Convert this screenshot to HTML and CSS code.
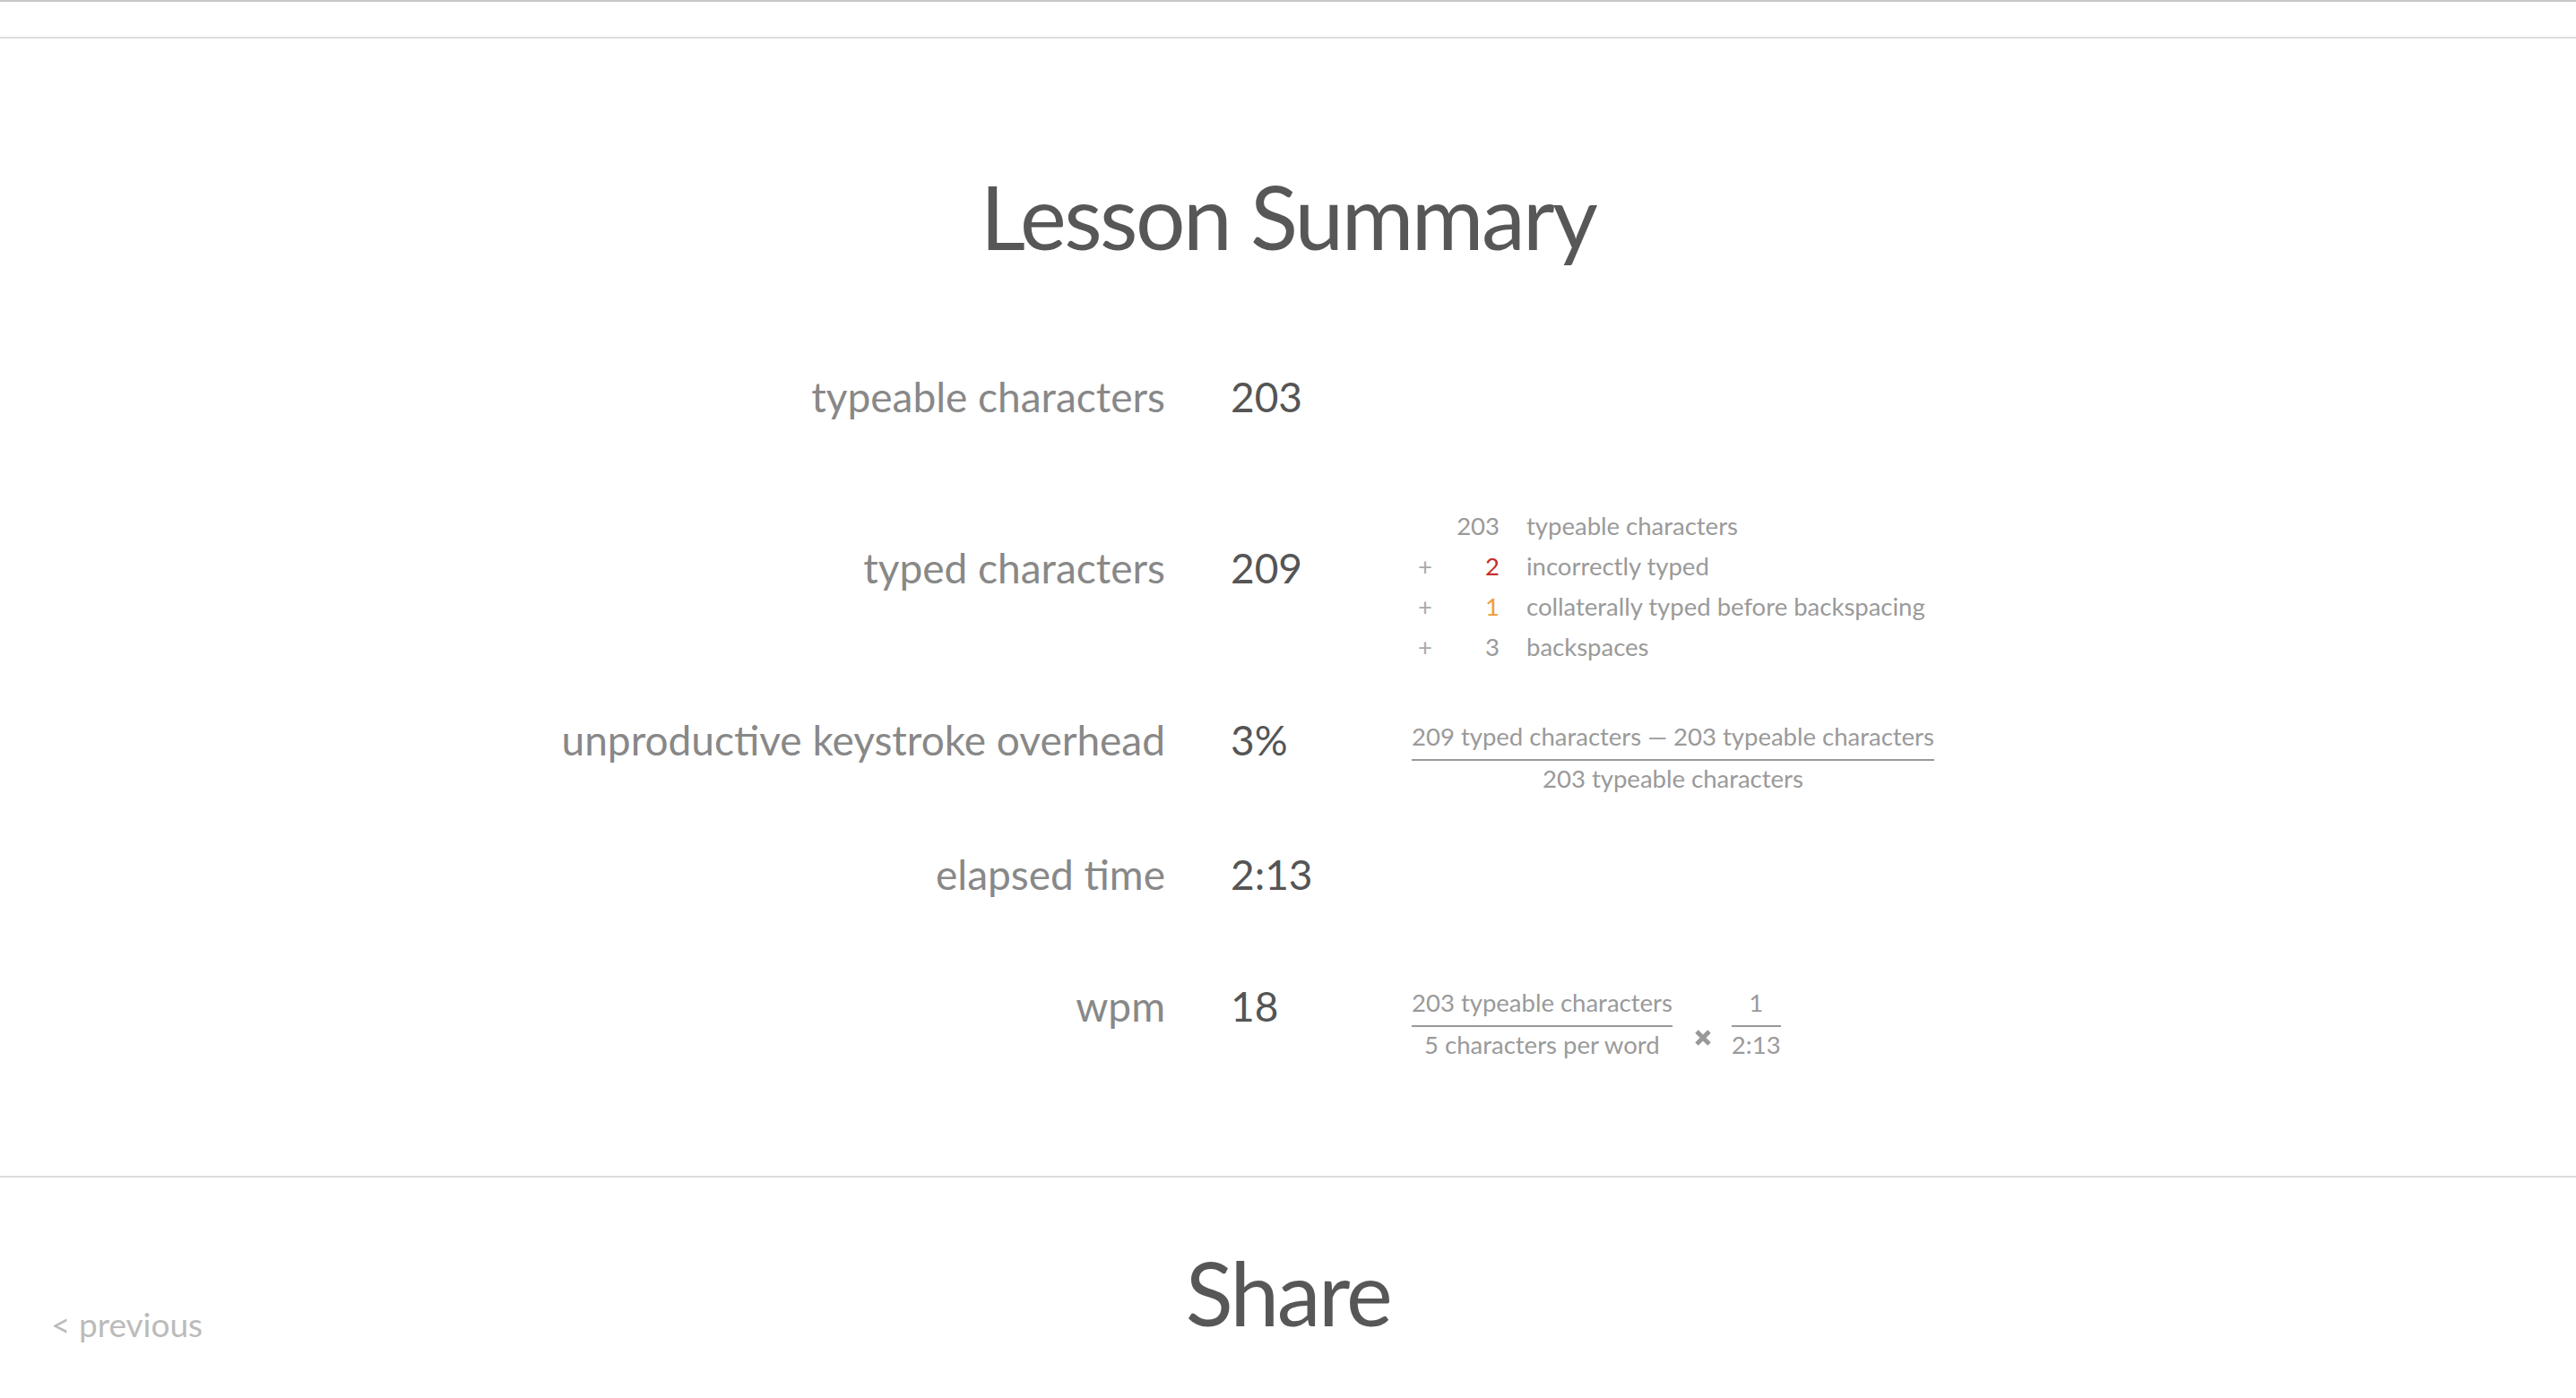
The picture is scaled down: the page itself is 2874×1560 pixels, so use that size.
FILE: index.html
```html
<!DOCTYPE html>
<html lang="en">
<head>
<meta charset="utf-8">
<title>Lesson Summary</title>
<link rel="stylesheet" href="styles.css">
</head>
<body>
<header class="topbar"></header>
<main class="summary">
  <h1 class="title">Lesson Summary</h1>
  <div class="stats">
    <div class="row">
      <div class="label">typeable characters</div>
      <div class="value">203</div>
      <div class="explain"></div>
    </div>
    <div class="row">
      <div class="label">typed characters</div>
      <div class="value">209</div>
      <div class="explain">
        <div class="breakdown">
          <span class="op"></span><span class="count">203</span><span class="desc">typeable characters</span>
          <span class="op">+</span><span class="count red">2</span><span class="desc">incorrectly typed</span>
          <span class="op">+</span><span class="count orange">1</span><span class="desc">collaterally typed before backspacing</span>
          <span class="op">+</span><span class="count">3</span><span class="desc">backspaces</span>
        </div>
      </div>
    </div>
    <div class="row">
      <div class="label">unproductive keystroke overhead</div>
      <div class="value">3%</div>
      <div class="explain">
        <div class="frac">
          <div class="num">209 typed characters — 203 typeable characters</div>
          <div class="den">203 typeable characters</div>
        </div>
      </div>
    </div>
    <div class="row">
      <div class="label">elapsed time</div>
      <div class="value">2:13</div>
      <div class="explain"></div>
    </div>
    <div class="row">
      <div class="label">wpm</div>
      <div class="value">18</div>
      <div class="explain">
        <div class="formula">
          <div class="frac">
            <div class="num">203 typeable characters</div>
            <div class="den">5 characters per word</div>
          </div>
          <svg class="times" viewBox="0 0 20 20" aria-hidden="true"><path d="M3 3 L17 17 M17 3 L3 17" stroke="#999" stroke-width="5" stroke-linecap="butt"/></svg>
          <div class="frac">
            <div class="num">1</div>
            <div class="den">2:13</div>
          </div>
        </div>
      </div>
    </div>
  </div>
</main>
<section class="share">
  <a class="prev" href="#">&lt; previous</a>
  <h2 class="share-title">Share</h2>
  <div></div>
</section>
</body>
</html>
```
FILE: styles.css
```css
* { box-sizing: border-box; }
html, body { margin: 0; padding: 0; background: #fff; }
body {
  font-family: Lato, "Open Sans", sans-serif;
  color: #555;
}
.topbar {
  height: 43px;
  border-top: 2px solid #c8c8c8;
  border-bottom: 2px solid #dedede;
}
.summary {
  padding-top: 140px;
  padding-bottom: 116px;
}
.title {
  margin: 0;
  text-align: center;
  font-size: 98px;
  font-weight: 400;
  line-height: 1.2;
  letter-spacing: -2.5px;
  color: #575757;
}
.stats {
  margin-top: 67px;
  display: grid;
  grid-template-columns: 1300px 129px 1fr;
  grid-template-rows: 150px 232px 152px 148px 146px;
  column-gap: 73px;
  align-items: center;
}
.row { display: contents; }
.label {
  text-align: right;
  font-size: 46px;
  line-height: 60px;
  color: #888;
  white-space: nowrap;
}
.value {
  font-size: 46px;
  line-height: 60px;
  color: #555;
}
.explain {
  padding-top: 40px;
  font-size: 27.5px;
  color: #9a9a9a;
}
.breakdown {
  display: grid;
  grid-template-columns: 30px 68px auto;
  line-height: 45px;
}
.op { text-align: center; color: #aaa; }
.count { text-align: right; }
.desc { padding-left: 30px; white-space: nowrap; }
.red { color: #c62d2d; }
.orange { color: #f29b38; }
.frac {
  display: inline-flex;
  flex-direction: column;
  align-items: stretch;
  text-align: center;
  white-space: nowrap;
}
.num {
  line-height: 34px;
  padding-bottom: 8px;
  border-bottom: 2px solid #999;
}
.den {
  line-height: 34px;
  padding-top: 3px;
}
.formula {
  display: flex;
  align-items: flex-end;
}
.times {
  width: 20px;
  height: 20px;
  margin: 0 22px 15px 24px;
}
.share {
  border-top: 2px solid #ddd;
  display: grid;
  grid-template-columns: 1fr auto 1fr;
  align-items: start;
  height: 248px;
}
.prev {
  justify-self: start;
  margin-top: 141px;
  padding-left: 57px;
  font-size: 37px;
  line-height: 46px;
  color: #bbb;
  text-decoration: none;
}
.share-title {
  margin: 70px 0 0;
  font-size: 98px;
  line-height: 1.2;
  font-weight: 400;
  letter-spacing: -2.5px;
  color: #575757;
}
```
